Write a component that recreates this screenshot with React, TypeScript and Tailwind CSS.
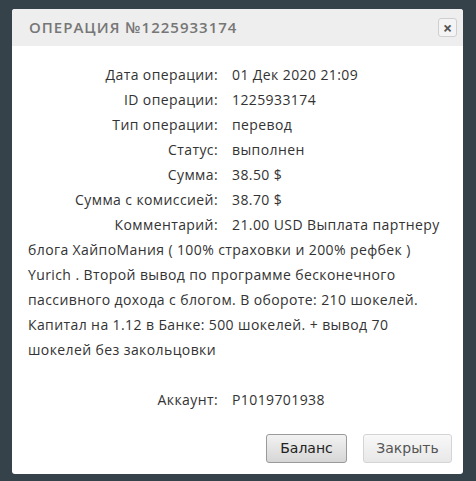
const rows = [
  { label: "Дата операции:", value: "01 Дек 2020 21:09" },
  { label: "ID операции:", value: "1225933174" },
  { label: "Тип операции:", value: "перевод" },
  { label: "Статус:", value: "выполнен" },
  { label: "Сумма:", value: "38.50 $" },
  { label: "Сумма с комиссией:", value: "38.70 $" },
];

const comment =
  "21.00 USD Выплата партнеру блога ХайпоМания ( 100% страховки и 200% рефбек ) Yurich . Второй вывод по программе бесконечного пассивного дохода с блогом. В обороте: 210 шокелей. Капитал на 1.12 в Банке: 500 шокелей. + вывод 70 шокелей без закольцовки";

const Row = ({ label, value }: { label: string; value: string }) => (
  <div>
    <span className="inline-block w-[190px] mr-[14px] text-right">{label}</span>
    {value}
  </div>
);

const App = () => {
  return (
    <div className="min-h-screen bg-[#36424a] pt-[9px] pl-[12px] font-['Open_Sans',sans-serif]">
      <div className="w-[451px] bg-white rounded-[3px] overflow-hidden">
        <div className="h-[37px] bg-[#eeeeee] flex items-center justify-between pl-[17px] pr-[6px]">
          <span className="text-[15px] font-semibold tracking-[1px] text-[#767676]">
            ОПЕРАЦИЯ №1225933174
          </span>
          <button className="w-[19px] h-[19px] rounded-[3px] border border-[#cfcfcf] bg-[#f4f4f4] flex items-center justify-center text-[#555] text-[16px] font-bold leading-none">
            ×
          </button>
        </div>

        <div className="pt-[16px] pl-[16px] pr-[22px] text-[14px] leading-[25px] tracking-[0.4px] text-[#333]">
          {rows.map((r) => (
            <Row key={r.label} label={r.label} value={r.value} />
          ))}
          <Row label="Комментарий:" value={comment} />
          <div className="mt-[25px]">
            <Row label="Аккаунт:" value="P1019701938" />
          </div>
        </div>

        <div className="flex justify-end gap-[16px] pt-[22px] pr-[11px] pb-[11px] font-['DejaVu_Sans',sans-serif] text-[14px]">
          <button className="w-[81px] h-[29px] rounded-[3px] border border-[#9a9a9a] bg-gradient-to-b from-[#f2f2f2] to-[#d6d6d6] text-[#222]">
            Баланс
          </button>
          <button className="w-[89px] h-[29px] rounded-[3px] border border-[#d4d4d4] bg-gradient-to-b from-[#f8f8f8] to-[#e8e8e8] text-[#555]">
            Закрыть
          </button>
        </div>
      </div>
    </div>
  );
};

export default App;
